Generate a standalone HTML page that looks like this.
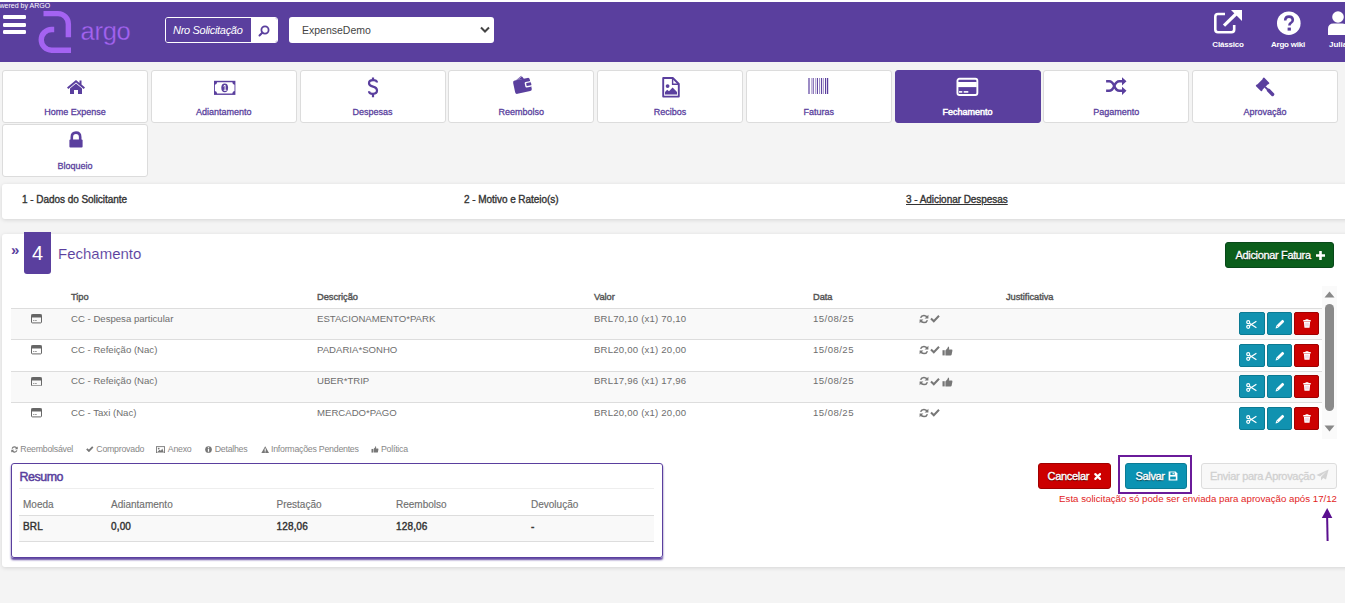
<!DOCTYPE html>
<html><head><meta charset="utf-8">
<style>
*{box-sizing:border-box;margin:0;padding:0}
html,body{width:1345px;height:603px;overflow:hidden}
body{background:#f4f4f4;font-family:"Liberation Sans",sans-serif;position:relative}
.a{position:absolute}
#hdr{left:0;top:2px;width:1345px;height:60px;background:#5a3f9e}
#topstrip{left:0;top:0;width:1345px;height:2px;background:#fff}
.bar{position:absolute;left:3px;width:23px;height:4px;background:#fff;border-radius:1.2px}
.tile{position:absolute;top:70px;width:146px;height:53px;background:#fff;border:1px solid #dcdcdc;border-radius:3px}
.tile .lbl{position:absolute;left:0;right:0;top:35.8px;text-align:center;font-size:9px;font-weight:normal;-webkit-text-stroke:0.3px #5a3f9e;color:#5a3f9e;line-height:10px;letter-spacing:0px}
.tile svg{position:absolute;left:50%;top:9px;transform:translateX(-50%)}
.tile.on{background:#5a3f9e;border-color:#5a3f9e}
.tile.on .lbl{color:#fff;-webkit-text-stroke:0.5px #fff}
.card{position:absolute;left:2px;width:1360px;background:#fff;border-radius:3px;box-shadow:0 1px 4px rgba(0,0,0,.13)}
.step{position:absolute;top:9.8px;font-size:10px;font-weight:normal;-webkit-text-stroke:0.35px #333;color:#333;line-height:12px;letter-spacing:-0.05px}
.th{position:absolute;top:292.3px;font-size:9.3px;font-weight:normal;-webkit-text-stroke:0.4px #555;color:#555;line-height:11px;letter-spacing:-0.05px}
.row{position:absolute;left:11px;width:1311px;height:31.5px;border-bottom:1px solid #ddd}
.row.g{background:#f9f9f9}
.td{position:absolute;top:3.5px;font-size:9.6px;color:#6e6e6e;line-height:12px}
.btn{position:absolute;top:3px;width:25px;height:23px;border-radius:2px}
.bi{background:#1192b0;border:1px solid #0b7a93}
.bd{background:#cc0000;border:1px solid #a00000}
.rh{position:absolute;top:499.2px;font-size:10px;color:#707070;-webkit-text-stroke:0.15px #707070;line-height:12px}
.rv{position:absolute;top:520.8px;font-size:10px;font-weight:normal;-webkit-text-stroke:0.4px #333;color:#333;line-height:12px;letter-spacing:0.15px}
.leg{position:absolute;top:444.3px;font-size:8.8px;color:#888;line-height:10px;letter-spacing:-0.25px}
</style></head><body>
<div id="topstrip" class="a"></div>
<div id="hdr" class="a">
  <div class="a" style="left:-9px;top:0px;font-size:7px;color:#fff;line-height:8px">Powered by ARGO</div>
  <div class="bar" style="top:13px"></div>
  <div class="bar" style="top:21px"></div>
  <div class="bar" style="top:28px"></div>
  <svg class="a" style="left:0;top:-2px" width="140" height="60" viewBox="0 0 140 60">
    <path d="M43.5 13.65 H58 A10.35 10.35 0 0 1 68.35 24 V37.3" fill="none" stroke="#a463f2" stroke-width="5.4"/>
    <path d="M54.2 29.5 H51.6 A10.35 10.35 0 0 0 51.6 50.2 H71" fill="none" stroke="#a463f2" stroke-width="5.4"/>
  </svg>
  <div class="a" style="left:80.5px;top:14.5px;font-size:25.5px;color:#a463f2;-webkit-text-stroke:0.3px #5a3f9e;line-height:28px;letter-spacing:-0.25px">argo</div>
  <!-- search -->
  <div class="a" style="left:165px;top:15px;width:113px;height:26px;border:1px solid #fff;border-radius:3px;overflow:hidden">
    <div class="a" style="left:0;top:0;width:85px;height:24px;background:#5a3f9e"></div>
    <div class="a" style="left:85px;top:0;width:27px;height:24px;background:#fff"></div>
    <div class="a" style="left:7px;top:6px;font-size:11px;font-style:italic;color:#fff;line-height:13px;letter-spacing:-0.3px">Nro Solicitação</div>
    <svg class="a" style="left:91px;top:6px" width="14" height="14" viewBox="0 0 14 14"><circle cx="8" cy="6" r="3.6" fill="none" stroke="#5a3f9e" stroke-width="1.8"/><path d="M5.5 8.5 L2.5 11.5" stroke="#5a3f9e" stroke-width="2" stroke-linecap="round"/></svg>
  </div>
  <!-- select -->
  <div class="a" style="left:289px;top:15px;width:205px;height:26px;background:#fff;border-radius:3px">
    <div class="a" style="left:13px;top:7px;font-size:10.5px;color:#444;line-height:13px">ExpenseDemo</div>
    <svg class="a" style="left:191px;top:9px" width="10" height="8" viewBox="0 0 10 8"><path d="M1 1.5 L5 5.5 L9 1.5" fill="none" stroke="#444" stroke-width="2"/></svg>
  </div>
  <!-- right icons -->
  <svg class="a" style="left:1212px;top:5px" width="34" height="30" viewBox="0 0 34 30">
    <path d="M13 7 H6 Q3.3 7 3.3 9.7 V22.6 Q3.3 25.3 6 25.3 H19.5 Q22.2 25.3 22.2 22.6 V18" fill="none" stroke="#fff" stroke-width="2.6"/>
    <path d="M12 18.6 L25.5 5.5" stroke="#fff" stroke-width="3.2"/>
    <path d="M19 3 H30 V14 Z" fill="#fff"/>
  </svg>
  <div class="a" style="left:1211px;top:38px;width:34px;text-align:center;font-size:8px;font-weight:bold;color:#fff;line-height:10px;letter-spacing:-0.2px">Clássico</div>
  <svg class="a" style="left:1276px;top:9px" width="26" height="25" viewBox="0 0 26 25">
    <circle cx="12.8" cy="12.2" r="11.8" fill="#fff"/>
    <path d="M9.2 9.6 Q9.2 5.6 13 5.6 Q16.8 5.6 16.8 9 Q16.8 11 14.6 12.2 Q13.4 12.9 13.4 14.6" fill="none" stroke="#5a3f9e" stroke-width="2.6"/>
    <rect x="11.6" y="16.6" width="3.3" height="3" fill="#5a3f9e"/>
  </svg>
  <div class="a" style="left:1268px;top:38px;width:40px;text-align:center;font-size:8px;font-weight:bold;color:#fff;line-height:10px;letter-spacing:-0.2px">Argo wiki</div>
  <svg class="a" style="left:1326px;top:8px" width="19" height="26" viewBox="0 0 19 26">
    <circle cx="12" cy="7" r="5.8" fill="#fff"/>
    <path d="M2 25 V19 Q2 13.5 7.5 13.5 H16.5 Q22 13.5 22 19 V25 Z" fill="#fff"/>
  </svg>
  <div class="a" style="left:1329px;top:38px;font-size:8px;font-weight:bold;color:#fff;line-height:10px">Julia</div>
</div>

<!-- tiles -->
<div class="tile" style="left:2px"><svg width="20" height="16" viewBox="0 0 20 16" style="margin-left:1px;top:8px"><path d="M10 1 L1 8.5 L2.3 10 L10 3.6 L17.7 10 L19 8.5 L15.5 5.6 V1.5 H13.5 V3.9 Z" fill="#5a3f9e"/><path d="M4 9.5 L10 4.6 L16 9.5 V15 H12 V11 H8 V15 H4 Z" fill="#5a3f9e"/></svg><div class="lbl">Home Expense</div></div>
<div class="tile" style="left:150.75px"><svg width="23" height="16" viewBox="0 0 23 16" style="top:8.8px;margin-left:1px"><rect x="0.5" y="0.8" width="21.4" height="14.1" fill="#5a3f9e"/><path d="M3.6 2.2 H18.8 Q19 4.6 21 4.8 V10.9 Q19 11.1 18.8 13.5 H3.6 Q3.4 11.1 1.4 10.9 V4.8 Q3.4 4.6 3.6 2.2 Z" fill="#fff"/><ellipse cx="11.2" cy="7.85" rx="3.4" ry="4.4" fill="#5a3f9e"/><path d="M10 6.2 L11.6 5.2 V10.3 M10.2 10.3 H13" stroke="#fff" stroke-width="1" fill="none"/></svg><div class="lbl">Adiantamento</div></div>
<div class="tile" style="left:299.5px"><svg width="12" height="21" viewBox="0 0 12 21" style="top:6.2px;margin-left:0px"><path d="M10 5.6 Q10 3.2 6 3.2 Q2 3.2 2 6.2 Q2 8.6 6 9.6 Q10 10.6 10 13.6 Q10 16.8 6 16.8 Q2 16.8 2 14.2" fill="none" stroke="#5a3f9e" stroke-width="2.2"/><path d="M6 0.6 V3.4 M6 16.6 V20.2" stroke="#5a3f9e" stroke-width="2.2"/></svg><div class="lbl">Despesas</div></div>
<div class="tile" style="left:448.25px"><svg width="22" height="22" viewBox="0 0 22 22" style="top:3px;margin-left:2px"><g transform="rotate(-12 11 12)"><path d="M5 5 L11.5 1.5 L13.5 5 Z" fill="#5a3f9e"/><path d="M6.5 5 L12 2.2" stroke="#fff" stroke-width="0.5"/><rect x="2" y="5" width="17" height="13.5" rx="2" fill="#5a3f9e"/><rect x="13.2" y="8.6" width="6.3" height="5.6" rx="1.2" fill="#fff"/><rect x="14.6" y="9.9" width="4.9" height="3" rx="0.5" fill="#5a3f9e"/></g></svg><div class="lbl">Reembolso</div></div>
<div class="tile" style="left:597px"><svg width="18" height="21" viewBox="0 0 18 21" style="top:6px;margin-left:1px"><path d="M1.2 1 H10.8 L16.8 7 V19.6 H1.2 Z" fill="none" stroke="#5a3f9e" stroke-width="1.9" stroke-linejoin="round"/><path d="M10.6 1.2 V7.2 H16.6" fill="none" stroke="#5a3f9e" stroke-width="1.4"/><circle cx="5.6" cy="9.1" r="1.9" fill="#5a3f9e"/><path d="M3 17.6 V15 L5.2 12.8 L7 14.3 L10.6 10.6 L15 15 V17.6 Z" fill="#5a3f9e"/></svg><div class="lbl">Recibos</div></div>
<div class="tile" style="left:745.75px"><svg width="22" height="17" viewBox="0 0 22 17" style="top:7px;margin-left:0px"><g stroke="#5a3f9e"><path d="M1 0 V16" stroke-width="1.2"/><path d="M3.4 0 V16" stroke-width="0.7" opacity="0.6"/><path d="M5.2 0 V16" stroke-width="1"/><path d="M7.6 0 V16" stroke-width="0.7" opacity="0.7"/><path d="M9.4 0 V16" stroke-width="1.1"/><path d="M11.6 0 V16" stroke-width="0.9" opacity="0.7"/><path d="M13.6 0 V16" stroke-width="1.1"/><path d="M15.6 0 V16" stroke-width="0.8" opacity="0.7"/><path d="M17.6 0 V16" stroke-width="1.2"/><path d="M19.6 0 V16" stroke-width="1.2"/></g></svg><div class="lbl">Faturas</div></div>
<div class="tile on" style="left:894.5px"><svg width="24" height="20" viewBox="0 0 24 20" style="top:6px;margin-left:-0.5px"><rect x="2.45" y="1.75" width="19.9" height="16.3" rx="2" fill="none" stroke="#fff" stroke-width="1.9"/><rect x="3" y="5" width="18.8" height="5.1" fill="#fff"/><rect x="4" y="14.1" width="3.3" height="1.6" fill="#fff"/><rect x="8.7" y="14.1" width="4.6" height="1.6" fill="#fff"/></svg><div class="lbl">Fechamento</div></div>
<div class="tile" style="left:1043.25px"><svg width="23" height="19" viewBox="0 0 23 19" style="top:6px;margin-left:1px"><path d="M0.6 4.3 H3.6 C6.6 4.3 7.6 6.2 8.75 9.05 C9.9 11.9 10.9 13.8 13.9 13.8 H17.5" fill="none" stroke="#5a3f9e" stroke-width="2.4"/><path d="M0.6 13.8 H3.6 C6.6 13.8 7.6 11.9 8.75 9.05 C9.9 6.2 10.9 4.3 13.9 4.3 H17.5" fill="none" stroke="#5a3f9e" stroke-width="2.4"/><path d="M16.5 0.2 L21 4.3 L16.5 8.4 Z M16.5 9.7 L21 13.8 L16.5 17.9 Z" fill="#5a3f9e"/></svg><div class="lbl">Pagamento</div></div>
<div class="tile" style="left:1192px"><svg width="24" height="22" viewBox="0 0 24 22" style="top:6px;margin-left:1px"><g transform="translate(8.6 7.4) rotate(45)"><rect x="-3.7" y="-4.6" width="7.4" height="9.2" fill="#5a3f9e"/><rect x="-4.1" y="-5.9" width="8.2" height="2.1" rx="0.7" fill="#5a3f9e"/><rect x="-4.1" y="3.8" width="8.2" height="2.1" rx="0.7" fill="#5a3f9e"/><rect x="3.4" y="-0.9" width="3.8" height="1.8" fill="#5a3f9e"/><rect x="6.8" y="-1.75" width="9" height="3.5" rx="1.6" fill="#5a3f9e"/></g></svg><div class="lbl">Aprovação</div></div>
<div class="tile" style="left:2px;top:124px"><svg width="16" height="18" viewBox="0 0 16 18" style="top:5.5px;margin-left:1px"><path d="M3.8 9 V6.2 Q3.8 1.6 8 1.6 Q12.2 1.6 12.2 6.2 V9" fill="none" stroke="#5a3f9e" stroke-width="2.6"/><rect x="1.4" y="8.6" width="13.2" height="8" rx="1" fill="#5a3f9e"/></svg><div class="lbl">Bloqueio</div></div>

<!-- steps -->
<div class="card" style="top:184px;height:35px">
  <div class="step" style="left:20px">1 - Dados do Solicitante</div>
  <div class="step" style="left:462px">2 - Motivo e Rateio(s)</div>
  <div class="step" style="left:904px;text-decoration:underline">3 - Adicionar Despesas</div>
</div>

<!-- main card -->
<div class="card" style="top:234px;height:333px"></div>
<div class="a" style="left:11px;top:240.5px;font-size:15px;font-weight:bold;color:#5a3f9e;line-height:17px">»</div>
<div class="a" style="left:24px;top:232px;width:27px;height:42px;background:#5a3f9e;border-radius:0 0 3px 3px;color:#fff;font-size:20px;text-align:center;line-height:43px">4</div>
<div class="a" style="left:58px;top:245px;font-size:15px;color:#5a3f9e;-webkit-text-stroke:0.1px #fff;line-height:17px">Fechamento</div>
<div class="a" style="left:1225px;top:242px;width:109px;height:26px;background:#0b5e1c;border:1px solid #08481a;border-radius:3px"></div>
<div class="a" style="left:1235.6px;top:248.5px;font-size:11px;color:#fff;line-height:13px;letter-spacing:-0.35px;-webkit-text-stroke:0.3px #fff;text-shadow:0 1px 1px rgba(0,0,0,0.7)">Adicionar Fatura</div>
<svg class="a" style="left:1315.6px;top:251px" width="9" height="9" viewBox="0 0 9 9"><path d="M4.5 0.6 V8.4 M0.6 4.5 H8.4" stroke="#fff" stroke-width="2.6" stroke-linecap="round"/></svg>

<!-- table header -->
<div class="th" style="left:71px">Tipo</div>
<div class="th" style="left:317px">Descrição</div>
<div class="th" style="left:594px">Valor</div>
<div class="th" style="left:813px">Data</div>
<div class="th" style="left:1006px">Justificativa</div>
<div class="a" style="left:11px;top:308px;width:1311px;height:1px;background:#ddd"></div>

<!--ROWS--><div class="row g" style="top:309px;height:31px"><svg class="a" style="left:20px;top:5.3px" width="11" height="9.4" viewBox="0 0 11 9.4"><rect x="0.5" y="0.5" width="10" height="8.4" rx="0.8" fill="none" stroke="#666" stroke-width="1"/><rect x="0.5" y="0.5" width="10" height="3" fill="#666"/><rect x="2" y="6.2" width="1.4" height="0.8" fill="#888"/><rect x="3.9" y="6.2" width="1.9" height="0.8" fill="#888"/></svg><div class="td" style="left:60px">CC - Despesa particular</div><div class="td" style="left:306px">ESTACIONAMENTO*PARK</div><div class="td" style="left:583px;letter-spacing:0.2px">BRL70,10 (x1) 70,10</div><div class="td" style="left:802px;letter-spacing:0.45px">15/08/25</div><svg class="a" style="left:907.5px;top:4.6px" width="10" height="10" viewBox="0 0 10 10"><path d="M8.3 3.6 A3.6 3.6 0 0 0 1.6 3.8 M1.7 6.4 A3.6 3.6 0 0 0 8.4 6.2" fill="none" stroke="#777" stroke-width="1.5"/><path d="M9.4 0.8 V4.6 H5.6 Z M0.6 9.2 V5.4 H4.4 Z" fill="#777"/></svg><svg class="a" style="left:919px;top:5.2px" width="10" height="9" viewBox="0 0 10 9"><path d="M1 4.5 L3.8 7.3 L9 1.8" fill="none" stroke="#777" stroke-width="2"/></svg><div class="btn bi" style="left:1228px;width:26px;top:3px"><svg class="a" style="left:6.3px;top:6.5px" width="11" height="9" viewBox="0 0 11 9"><circle cx="2.2" cy="2.2" r="1.5" fill="none" stroke="#fff" stroke-width="1.2"/><circle cx="2.2" cy="6.8" r="1.5" fill="none" stroke="#fff" stroke-width="1.2"/><path d="M3.4 3.2 L10.4 7.8 M3.4 5.8 L10.4 1.2" stroke="#fff" stroke-width="1.3"/></svg></div><div class="btn bi" style="left:1256px;top:3px"><svg class="a" style="left:6.8px;top:5.5px" width="10" height="10" viewBox="0 0 10 10"><path d="M0.6 9.4 L1.2 6.8 L6.8 1.2 Q7.5 0.5 8.2 1.2 L8.8 1.8 Q9.5 2.5 8.8 3.2 L3.2 8.8 Z" fill="#fff"/><path d="M1.4 6.6 L3.4 8.6" stroke="#1192b0" stroke-width="0.6"/></svg></div><div class="btn bd" style="left:1283px;top:3px"><svg class="a" style="left:7.6px;top:5.6px" width="8" height="9" viewBox="0 0 9 10"><rect x="0.2" y="1.2" width="8.6" height="1.5" rx="0.4" fill="#fff"/><rect x="2.8" y="0.2" width="3.4" height="1.4" rx="0.4" fill="#fff"/><path d="M1 3 H8 L7.4 9.4 Q7.3 9.8 6.9 9.8 H2.1 Q1.7 9.8 1.6 9.4 Z" fill="#fff"/><path d="M3.4 4.2 V8.4 M5.6 4.2 V8.4" stroke="#d9a0c0" stroke-width="0.8"/></svg></div></div>
<div class="row" style="top:340px;height:31.5px"><svg class="a" style="left:20px;top:5.3px" width="11" height="9.4" viewBox="0 0 11 9.4"><rect x="0.5" y="0.5" width="10" height="8.4" rx="0.8" fill="none" stroke="#666" stroke-width="1"/><rect x="0.5" y="0.5" width="10" height="3" fill="#666"/><rect x="2" y="6.2" width="1.4" height="0.8" fill="#888"/><rect x="3.9" y="6.2" width="1.9" height="0.8" fill="#888"/></svg><div class="td" style="left:60px">CC - Refeição (Nac)</div><div class="td" style="left:306px">PADARIA*SONHO</div><div class="td" style="left:583px;letter-spacing:0.2px">BRL20,00 (x1) 20,00</div><div class="td" style="left:802px;letter-spacing:0.45px">15/08/25</div><svg class="a" style="left:907.5px;top:4.6px" width="10" height="10" viewBox="0 0 10 10"><path d="M8.3 3.6 A3.6 3.6 0 0 0 1.6 3.8 M1.7 6.4 A3.6 3.6 0 0 0 8.4 6.2" fill="none" stroke="#777" stroke-width="1.5"/><path d="M9.4 0.8 V4.6 H5.6 Z M0.6 9.2 V5.4 H4.4 Z" fill="#777"/></svg><svg class="a" style="left:919px;top:5.2px" width="10" height="9" viewBox="0 0 10 9"><path d="M1 4.5 L3.8 7.3 L9 1.8" fill="none" stroke="#777" stroke-width="2"/></svg><svg class="a" style="left:931px;top:5.5px" width="11" height="10" viewBox="0 0 11 10"><rect x="0.5" y="4.2" width="2.2" height="5.2" fill="#777"/><path d="M3.4 4.4 L5.6 2 L6 0.4 Q7.4 0.4 7.2 2.4 L6.8 3.6 H9.6 Q10.6 3.6 10.4 4.8 L9.6 8.8 Q9.4 9.4 8.6 9.4 H3.4 Z" fill="#777"/></svg><div class="btn bi" style="left:1228px;width:26px;top:4px"><svg class="a" style="left:6.3px;top:6.5px" width="11" height="9" viewBox="0 0 11 9"><circle cx="2.2" cy="2.2" r="1.5" fill="none" stroke="#fff" stroke-width="1.2"/><circle cx="2.2" cy="6.8" r="1.5" fill="none" stroke="#fff" stroke-width="1.2"/><path d="M3.4 3.2 L10.4 7.8 M3.4 5.8 L10.4 1.2" stroke="#fff" stroke-width="1.3"/></svg></div><div class="btn bi" style="left:1256px;top:4px"><svg class="a" style="left:6.8px;top:5.5px" width="10" height="10" viewBox="0 0 10 10"><path d="M0.6 9.4 L1.2 6.8 L6.8 1.2 Q7.5 0.5 8.2 1.2 L8.8 1.8 Q9.5 2.5 8.8 3.2 L3.2 8.8 Z" fill="#fff"/><path d="M1.4 6.6 L3.4 8.6" stroke="#1192b0" stroke-width="0.6"/></svg></div><div class="btn bd" style="left:1283px;top:4px"><svg class="a" style="left:7.6px;top:5.6px" width="8" height="9" viewBox="0 0 9 10"><rect x="0.2" y="1.2" width="8.6" height="1.5" rx="0.4" fill="#fff"/><rect x="2.8" y="0.2" width="3.4" height="1.4" rx="0.4" fill="#fff"/><path d="M1 3 H8 L7.4 9.4 Q7.3 9.8 6.9 9.8 H2.1 Q1.7 9.8 1.6 9.4 Z" fill="#fff"/><path d="M3.4 4.2 V8.4 M5.6 4.2 V8.4" stroke="#d9a0c0" stroke-width="0.8"/></svg></div></div>
<div class="row g" style="top:371.5px;height:31.5px"><svg class="a" style="left:20px;top:5.3px" width="11" height="9.4" viewBox="0 0 11 9.4"><rect x="0.5" y="0.5" width="10" height="8.4" rx="0.8" fill="none" stroke="#666" stroke-width="1"/><rect x="0.5" y="0.5" width="10" height="3" fill="#666"/><rect x="2" y="6.2" width="1.4" height="0.8" fill="#888"/><rect x="3.9" y="6.2" width="1.9" height="0.8" fill="#888"/></svg><div class="td" style="left:60px">CC - Refeição (Nac)</div><div class="td" style="left:306px">UBER*TRIP</div><div class="td" style="left:583px;letter-spacing:0.2px">BRL17,96 (x1) 17,96</div><div class="td" style="left:802px;letter-spacing:0.45px">15/08/25</div><svg class="a" style="left:907.5px;top:4.6px" width="10" height="10" viewBox="0 0 10 10"><path d="M8.3 3.6 A3.6 3.6 0 0 0 1.6 3.8 M1.7 6.4 A3.6 3.6 0 0 0 8.4 6.2" fill="none" stroke="#777" stroke-width="1.5"/><path d="M9.4 0.8 V4.6 H5.6 Z M0.6 9.2 V5.4 H4.4 Z" fill="#777"/></svg><svg class="a" style="left:919px;top:5.2px" width="10" height="9" viewBox="0 0 10 9"><path d="M1 4.5 L3.8 7.3 L9 1.8" fill="none" stroke="#777" stroke-width="2"/></svg><svg class="a" style="left:931px;top:5.5px" width="11" height="10" viewBox="0 0 11 10"><rect x="0.5" y="4.2" width="2.2" height="5.2" fill="#777"/><path d="M3.4 4.4 L5.6 2 L6 0.4 Q7.4 0.4 7.2 2.4 L6.8 3.6 H9.6 Q10.6 3.6 10.4 4.8 L9.6 8.8 Q9.4 9.4 8.6 9.4 H3.4 Z" fill="#777"/></svg><div class="btn bi" style="left:1228px;width:26px;top:3.5px"><svg class="a" style="left:6.3px;top:6.5px" width="11" height="9" viewBox="0 0 11 9"><circle cx="2.2" cy="2.2" r="1.5" fill="none" stroke="#fff" stroke-width="1.2"/><circle cx="2.2" cy="6.8" r="1.5" fill="none" stroke="#fff" stroke-width="1.2"/><path d="M3.4 3.2 L10.4 7.8 M3.4 5.8 L10.4 1.2" stroke="#fff" stroke-width="1.3"/></svg></div><div class="btn bi" style="left:1256px;top:3.5px"><svg class="a" style="left:6.8px;top:5.5px" width="10" height="10" viewBox="0 0 10 10"><path d="M0.6 9.4 L1.2 6.8 L6.8 1.2 Q7.5 0.5 8.2 1.2 L8.8 1.8 Q9.5 2.5 8.8 3.2 L3.2 8.8 Z" fill="#fff"/><path d="M1.4 6.6 L3.4 8.6" stroke="#1192b0" stroke-width="0.6"/></svg></div><div class="btn bd" style="left:1283px;top:3.5px"><svg class="a" style="left:7.6px;top:5.6px" width="8" height="9" viewBox="0 0 9 10"><rect x="0.2" y="1.2" width="8.6" height="1.5" rx="0.4" fill="#fff"/><rect x="2.8" y="0.2" width="3.4" height="1.4" rx="0.4" fill="#fff"/><path d="M1 3 H8 L7.4 9.4 Q7.3 9.8 6.9 9.8 H2.1 Q1.7 9.8 1.6 9.4 Z" fill="#fff"/><path d="M3.4 4.2 V8.4 M5.6 4.2 V8.4" stroke="#d9a0c0" stroke-width="0.8"/></svg></div></div>
<div class="row" style="top:403px;height:31.5px;border-bottom:none"><svg class="a" style="left:20px;top:5.3px" width="11" height="9.4" viewBox="0 0 11 9.4"><rect x="0.5" y="0.5" width="10" height="8.4" rx="0.8" fill="none" stroke="#666" stroke-width="1"/><rect x="0.5" y="0.5" width="10" height="3" fill="#666"/><rect x="2" y="6.2" width="1.4" height="0.8" fill="#888"/><rect x="3.9" y="6.2" width="1.9" height="0.8" fill="#888"/></svg><div class="td" style="left:60px">CC - Taxi (Nac)</div><div class="td" style="left:306px">MERCADO*PAGO</div><div class="td" style="left:583px;letter-spacing:0.2px">BRL20,00 (x1) 20,00</div><div class="td" style="left:802px;letter-spacing:0.45px">15/08/25</div><svg class="a" style="left:907.5px;top:4.6px" width="10" height="10" viewBox="0 0 10 10"><path d="M8.3 3.6 A3.6 3.6 0 0 0 1.6 3.8 M1.7 6.4 A3.6 3.6 0 0 0 8.4 6.2" fill="none" stroke="#777" stroke-width="1.5"/><path d="M9.4 0.8 V4.6 H5.6 Z M0.6 9.2 V5.4 H4.4 Z" fill="#777"/></svg><svg class="a" style="left:919px;top:5.2px" width="10" height="9" viewBox="0 0 10 9"><path d="M1 4.5 L3.8 7.3 L9 1.8" fill="none" stroke="#777" stroke-width="2"/></svg><div class="btn bi" style="left:1228px;width:26px;top:4px"><svg class="a" style="left:6.3px;top:6.5px" width="11" height="9" viewBox="0 0 11 9"><circle cx="2.2" cy="2.2" r="1.5" fill="none" stroke="#fff" stroke-width="1.2"/><circle cx="2.2" cy="6.8" r="1.5" fill="none" stroke="#fff" stroke-width="1.2"/><path d="M3.4 3.2 L10.4 7.8 M3.4 5.8 L10.4 1.2" stroke="#fff" stroke-width="1.3"/></svg></div><div class="btn bi" style="left:1256px;top:4px"><svg class="a" style="left:6.8px;top:5.5px" width="10" height="10" viewBox="0 0 10 10"><path d="M0.6 9.4 L1.2 6.8 L6.8 1.2 Q7.5 0.5 8.2 1.2 L8.8 1.8 Q9.5 2.5 8.8 3.2 L3.2 8.8 Z" fill="#fff"/><path d="M1.4 6.6 L3.4 8.6" stroke="#1192b0" stroke-width="0.6"/></svg></div><div class="btn bd" style="left:1283px;top:4px"><svg class="a" style="left:7.6px;top:5.6px" width="8" height="9" viewBox="0 0 9 10"><rect x="0.2" y="1.2" width="8.6" height="1.5" rx="0.4" fill="#fff"/><rect x="2.8" y="0.2" width="3.4" height="1.4" rx="0.4" fill="#fff"/><path d="M1 3 H8 L7.4 9.4 Q7.3 9.8 6.9 9.8 H2.1 Q1.7 9.8 1.6 9.4 Z" fill="#fff"/><path d="M3.4 4.2 V8.4 M5.6 4.2 V8.4" stroke="#d9a0c0" stroke-width="0.8"/></svg></div></div><!--/ROWS-->
<!-- legend -->
<svg class="a" style="left:10.5px;top:445.8px" width="7" height="7" viewBox="0 0 10 10"><path d="M8.3 3.6 A3.6 3.6 0 0 0 1.6 3.8 M1.7 6.4 A3.6 3.6 0 0 0 8.4 6.2" fill="none" stroke="#777" stroke-width="1.8"/><path d="M9.6 0.6 V4.8 H5.4 Z M0.4 9.4 V5.2 H4.6 Z" fill="#777"/></svg>
<div class="leg" style="left:20.3px">Reembolsável</div>
<svg class="a" style="left:86px;top:445.6px" width="7.6" height="6" viewBox="0 0 10 8"><path d="M1 3.8 L3.8 6.6 L9 1.2" fill="none" stroke="#777" stroke-width="2.4"/></svg>
<div class="leg" style="left:96.3px">Comprovado</div>
<svg class="a" style="left:156px;top:445.5px" width="9" height="7.6" viewBox="0 0 10 8"><rect x="0.5" y="0.5" width="9" height="7" fill="none" stroke="#777" stroke-width="1"/><circle cx="3" cy="2.6" r="1" fill="#777"/><path d="M1.5 6.5 L4 4 L5.5 5 L7 2.6 L8.5 6.5 Z" fill="#777"/></svg>
<div class="leg" style="left:167.8px">Anexo</div>
<svg class="a" style="left:205px;top:446px" width="7" height="7" viewBox="0 0 9 9"><circle cx="4.5" cy="4.5" r="4.3" fill="#777"/><rect x="3.7" y="3.8" width="1.6" height="3.6" fill="#fff"/><rect x="3.7" y="1.5" width="1.6" height="1.5" fill="#fff"/></svg>
<div class="leg" style="left:214.7px">Detalhes</div>
<svg class="a" style="left:260.5px;top:445.5px" width="8.4" height="7.4" viewBox="0 0 10 9"><path d="M5 0.3 L9.8 8.7 H0.2 Z" fill="#777"/><rect x="4.3" y="3" width="1.4" height="3" fill="#fff"/><rect x="4.3" y="6.6" width="1.4" height="1.1" fill="#fff"/></svg>
<div class="leg" style="left:271px">Informações Pendentes</div>
<svg class="a" style="left:370.5px;top:446px" width="8" height="7" viewBox="0 0 11 10"><rect x="0.5" y="4.2" width="2.2" height="5.2" fill="#777"/><path d="M3.4 4.4 L5.6 2 L6 0.4 Q7.4 0.4 7.2 2.4 L6.8 3.6 H9.6 Q10.6 3.6 10.4 4.8 L9.6 8.8 Q9.4 9.4 8.6 9.4 H3.4 Z" fill="#777"/></svg>
<div class="leg" style="left:381px">Política</div>

<!-- resumo -->
<div class="a" style="left:11px;top:463px;width:652px;height:95px;border:1.2px solid #5a3f9e;border-radius:3px;box-shadow:0 2px 2px -0.5px rgba(90,63,158,0.95)"></div>
<div class="a" style="left:19.6px;top:470.3px;font-size:12.4px;font-weight:normal;-webkit-text-stroke:0.5px #5a3f9e;color:#5a3f9e;line-height:14px;letter-spacing:-0.45px">Resumo</div>
<div class="a" style="left:19px;top:488px;width:635px;height:1px;background:#eee"></div>
<div class="rh" style="left:23px">Moeda</div>
<div class="rh" style="left:111px">Adiantamento</div>
<div class="rh" style="left:276.5px">Prestação</div>
<div class="rh" style="left:396px">Reembolso</div>
<div class="rh" style="left:531px">Devolução</div>
<div class="a" style="left:19px;top:515px;width:635px;height:27px;background:#f9f9f9;border-top:1px solid #ddd;border-bottom:1px solid #ddd"></div>
<div class="rv" style="left:23px">BRL</div>
<div class="rv" style="left:111px">0,00</div>
<div class="rv" style="left:276.5px">128,06</div>
<div class="rv" style="left:396px">128,06</div>
<div class="rv" style="left:531px">-</div>

<!-- scrollbar -->
<div class="a" style="left:1322px;top:286px;width:15px;height:153px;background:#fafafa"></div>
<div class="a" style="left:1325px;top:303.5px;width:9px;height:107px;background:#8a8a8a;border-radius:4.5px"></div>
<svg class="a" style="left:1323px;top:290px" width="13" height="9" viewBox="0 0 13 9"><path d="M6.5 1.5 L11.5 7.5 H1.5 Z" fill="#888"/></svg>
<svg class="a" style="left:1323px;top:424px" width="13" height="9" viewBox="0 0 13 9"><path d="M6.5 7.5 L11.5 1.5 H1.5 Z" fill="#888"/></svg>

<!-- bottom buttons -->
<div class="a" style="left:1038px;top:463px;width:73px;height:26px;background:#cc0000;border:1px solid #a00000;border-radius:3px"></div>
<div class="a" style="left:1047.5px;top:469.5px;font-size:11px;color:#fff;line-height:13px;letter-spacing:-0.3px;-webkit-text-stroke:0.35px #fff;text-shadow:0 1px 1px rgba(0,0,0,0.7)">Cancelar</div>
<svg class="a" style="left:1093.8px;top:472.6px" width="7.4" height="7" viewBox="0 0 8 8"><path d="M1.3 1.3 L6.7 6.7 M6.7 1.3 L1.3 6.7" stroke="#fff" stroke-width="2.5" stroke-linecap="round"/></svg>
<div class="a" style="left:1118px;top:455px;width:74px;height:39px;border:2px solid #6a1b9a"></div>
<div class="a" style="left:1125px;top:463px;width:62px;height:26px;background:#0b93b3;border:1px solid #0a7b95;border-radius:3px"></div>
<div class="a" style="left:1135.6px;top:469.5px;font-size:11px;color:#fff;line-height:13px;letter-spacing:-0.35px;-webkit-text-stroke:0.35px #fff;text-shadow:0 1px 1px rgba(0,0,0,0.7)">Salvar</div>
<svg class="a" style="left:1167.8px;top:470.8px" width="10" height="10" viewBox="0 0 10 10"><path d="M0.6 0.6 H7.6 L9.4 2.4 V9.4 H0.6 Z" fill="#fff"/><rect x="2.4" y="1.4" width="4.2" height="2.6" fill="#0b93b3"/><rect x="4.6" y="1.8" width="1.2" height="1.6" fill="#fff"/><rect x="2.2" y="5.6" width="5.6" height="2.8" fill="#0b93b3"/></svg>
<div class="a" style="left:1201px;top:463px;width:136px;height:26px;background:#f8f8f8;border:1px solid #ddd;border-radius:3px"></div>
<div class="a" style="left:1210px;top:469.5px;font-size:11px;color:#d0d0d0;line-height:13px;letter-spacing:-0.3px;-webkit-text-stroke:0.3px #d0d0d0">Enviar para Aprovação</div>
<svg class="a" style="left:1316px;top:469px" width="13" height="12" viewBox="0 0 13 12"><path d="M12.6 0.4 L0.4 6 L4 7.4 L10.4 2.2 L5 8 V11.6 L7.2 9 L10 10.4 Z" fill="#d3d3d3"/></svg>
<div class="a" style="left:900px;width:437px;top:493.2px;text-align:right;font-size:9.7px;color:#e21d1d;line-height:11px">Esta solicitação só pode ser enviada para aprovação após 17/12</div>
<svg class="a" style="left:1315px;top:505px" width="25" height="40" viewBox="0 0 25 40"><path d="M12.6 36 L12.1 10" stroke="#5a0f8f" stroke-width="2"/><path d="M12.2 3 L17.3 13 H6.8 Z" fill="#5a0f8f"/></svg>
</body></html>
